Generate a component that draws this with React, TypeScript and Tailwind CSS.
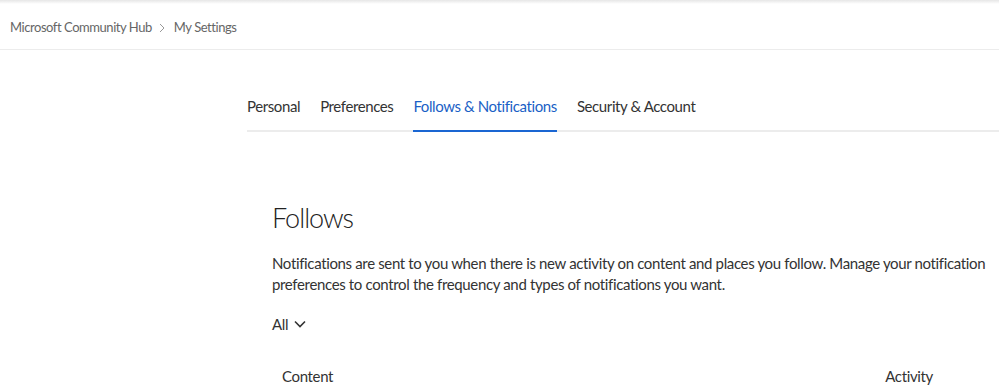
import React from 'react';

const tabs = ['Personal', 'Preferences', 'Follows & Notifications', 'Security & Account'];

const App: React.FC = () => {
  const active = 'Follows & Notifications';

  return (
    <div className="w-[999px] h-[392px] overflow-hidden bg-white text-[#333] font-['Lato',sans-serif]">
      {/* top shadow strip */}
      <div className="h-[4px] bg-gradient-to-b from-[#e6e6e6] to-white" />

      {/* breadcrumb */}
      <div className="h-[46px] flex items-center pl-[10px] pt-[2px] text-[13px] tracking-[-0.45px] text-[#666] border-b border-[#ececec]">
        <span>Microsoft Community Hub</span>
        <svg className="ml-[6px] mr-[8px] w-[8px] h-[10px]" viewBox="0 0 8 10" fill="none">
          <path d="M2 1l4 4-4 4" stroke="#999" strokeWidth="1" />
        </svg>
        <span>My Settings</span>
      </div>

      {/* tabs */}
      <div className="ml-[247px] mt-[45px] flex gap-[20px] border-b-2 border-[#ececec] text-[15px] tracking-[-0.4px]">
        {tabs.map((t) => (
          <div
            key={t}
            className={`pb-[12px] -mb-[2px] border-b-2 ${
              t === active ? 'border-[#1a66d2] text-[#1a5fc6]' : 'border-transparent'
            }`}
          >
            {t}
          </div>
        ))}
      </div>

      {/* follows section */}
      <div className="ml-[272px] mt-[69px] pr-[10px] tracking-[-0.35px]">
        <h2 className="text-[27px] font-light text-[#222] leading-[34px] tracking-[-1px]">Follows</h2>
        <p className="mt-[18px] text-[15px] leading-[21px] whitespace-nowrap">
          Notifications are sent to you when there is new activity on content and places you follow. Manage your notification
          <br />
          preferences to control the frequency and types of notifications you want.
        </p>
        <button className="mt-[18px] flex items-center gap-[6px] text-[15px]">
          All
          <svg className="w-[12px] h-[8px]" viewBox="0 0 12 8" fill="none">
            <path d="M1 1.5l5 5 5-5" stroke="#333" strokeWidth="1.6" />
          </svg>
        </button>
        <div className="mt-[30px] flex justify-between pl-[10px] pr-[56px] text-[15px]">
          <span>Content</span>
          <span>Activity</span>
        </div>
      </div>
    </div>
  );
};

export default App;
